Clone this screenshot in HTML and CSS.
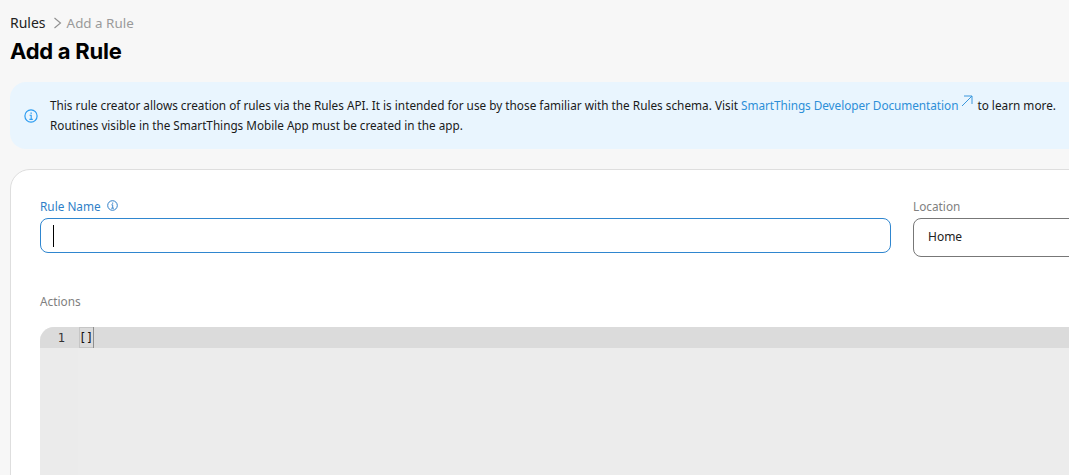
FILE: index.html
```html
<!DOCTYPE html>
<html lang="en">
<head>
<meta charset="utf-8">
<title>Add a Rule</title>
<link rel="stylesheet" href="styles.css">
</head>
<body>
<main class="page">
  <nav class="crumbs">
    <span class="crumb">Rules</span>
    <svg class="crumb-sep" width="9" height="12" viewBox="0 0 9 12"><path d="M1.5 1 L7.5 6 L1.5 11" fill="none" stroke="#8f8f8f" stroke-width="1.1"/></svg>
    <span class="crumb crumb-current">Add a Rule</span>
  </nav>
  <h1 class="title">Add a Rule</h1>
  <section class="notice">
    <svg class="notice-icon" width="14" height="14" viewBox="0 0 14 14"><circle cx="7" cy="7" r="6.1" fill="none" stroke="#2d9cf0" stroke-width="1.2"/><path d="M5.6 6.2H7.2V10.4M5.4 10.4H8.8" fill="none" stroke="#2d9cf0" stroke-width="1.1"/><rect x="6.5" y="3.5" width="1.3" height="1.3" fill="#2d9cf0"/></svg>
    <p class="notice-text">This rule creator allows creation of rules via the Rules API. It is intended for use by those familiar with the Rules schema. Visit <a class="notice-link" href="#">SmartThings Developer Documentation<svg class="ext" width="12" height="12" viewBox="0 0 12 12"><path d="M1 11 L11 1 M3 1 H11 V9" fill="none" stroke="#3a97dc" stroke-width="1"/></svg></a> to learn more.<br><span class="notice-second">Routines visible in the SmartThings Mobile App must be created in the app.</span></p>
  </section>
  <section class="card">
    <div class="fields">
      <div class="field field-name">
        <label class="label label-active">Rule Name
          <svg class="label-icon" width="11" height="11" viewBox="0 0 11 11"><circle cx="5.5" cy="5.5" r="4.8" fill="none" stroke="#2f7fc8" stroke-width="1"/><path d="M4.4 4.8H5.7V8.2M4.2 8.2H7" fill="none" stroke="#2f7fc8" stroke-width="0.9"/><rect x="5.1" y="2.6" width="1.1" height="1.1" fill="#2f7fc8"/></svg>
        </label>
        <div class="input input-focus"><span class="caret"></span></div>
      </div>
      <div class="field field-location">
        <label class="label">Location</label>
        <div class="input input-select">Home</div>
      </div>
    </div>
    <div class="label actions-label">Actions</div>
    <div class="editor">
      <div class="editor-line"><span class="line-no">1</span><span class="code"><span class="bracket">[</span><span class="bracket">]</span></span></div>
      <div class="editor-rest"><span class="gutter"></span></div>
    </div>
  </section>
</main>
</body>
</html>
```
FILE: styles.css
```css
* { box-sizing: border-box; }
html, body { margin: 0; height: 100%; overflow: hidden; }
body { background: #f7f7f7; font-family: "Noto Sans", sans-serif; color: #111; }
.page { width: 1400px; padding: 13px 0 0 10px; }
.crumbs { display: flex; align-items: center; height: 19px; font-size: 14px; }
.crumb { color: #222; }
.crumb-current { color: #9a9a9a; font-size: 13.4px; }
.crumb-sep { margin: 0 5px 0 7px; }
.title { margin: 4px 0 0; height: 30px; font: 700 22px/30px Inter, sans-serif; color: #000; letter-spacing: -0.25px; }
.notice { display: flex; align-items: center; margin: 16px 0 0; height: 67px; background: #e9f5fe; border-radius: 16px; padding-left: 14px; }
.notice-icon { flex: none; margin-right: 12px; }
.notice-text { margin: -1px 0 0; font-size: 11.79px; line-height: 20px; color: #1a1a1a; }
.notice-second { font-size: 11.72px; }
.notice-link { color: #2d8fd8; text-decoration: none; letter-spacing: -0.05px; }
.ext { margin: 0 1px 2px 3px; vertical-align: 1px; }
.card { margin-top: 20px; height: 400px; background: #fff; border: 1px solid #dedede; border-radius: 20px; padding: 27px 29px; }
.fields { display: flex; gap: 22px; }
.field-name { width: 851px; }
.field-location { width: 300px; }
.label { display: block; font-size: 11.8px; line-height: 18px; color: #808080; }
.label-active { color: #2f7fc8; }
.label-icon { margin-left: 3px; vertical-align: 0; }
.input { margin-top: 3px; border-radius: 8px; font-size: 12px; }
.input-focus { height: 35px; border: 1px solid #2f86cf; padding: 6px 12px; }
.caret { display: block; width: 1px; height: 22px; background: #000; }
.input-select { height: 39px; border: 1px solid #777; padding: 0 14px; line-height: 35px; color: #222; }
.actions-label { margin-top: 35px; }
.editor { margin-top: 17px; height: 300px; background: #ececec; border-radius: 14px 0 0 0; overflow: hidden; }
.editor-line { display: flex; height: 21px; background: #dbdbdb; font: 12px/23px "DejaVu Sans Mono", monospace; color: #333; }
.line-no { width: 39px; padding-right: 14px; text-align: right; }
.code { display: flex; height: 21px; color: #111; font-weight: 400; box-shadow: inset 0 0 0 1px #c6c6c6; }
.bracket { display: block; width: 7px; text-align: center; }
.bracket:last-child { border-right: 1px solid #8f8f8f; width: 8px; }
.editor-rest { height: 279px; }
.gutter { display: block; width: 38px; height: 100%; background: #ebebeb; }
```
